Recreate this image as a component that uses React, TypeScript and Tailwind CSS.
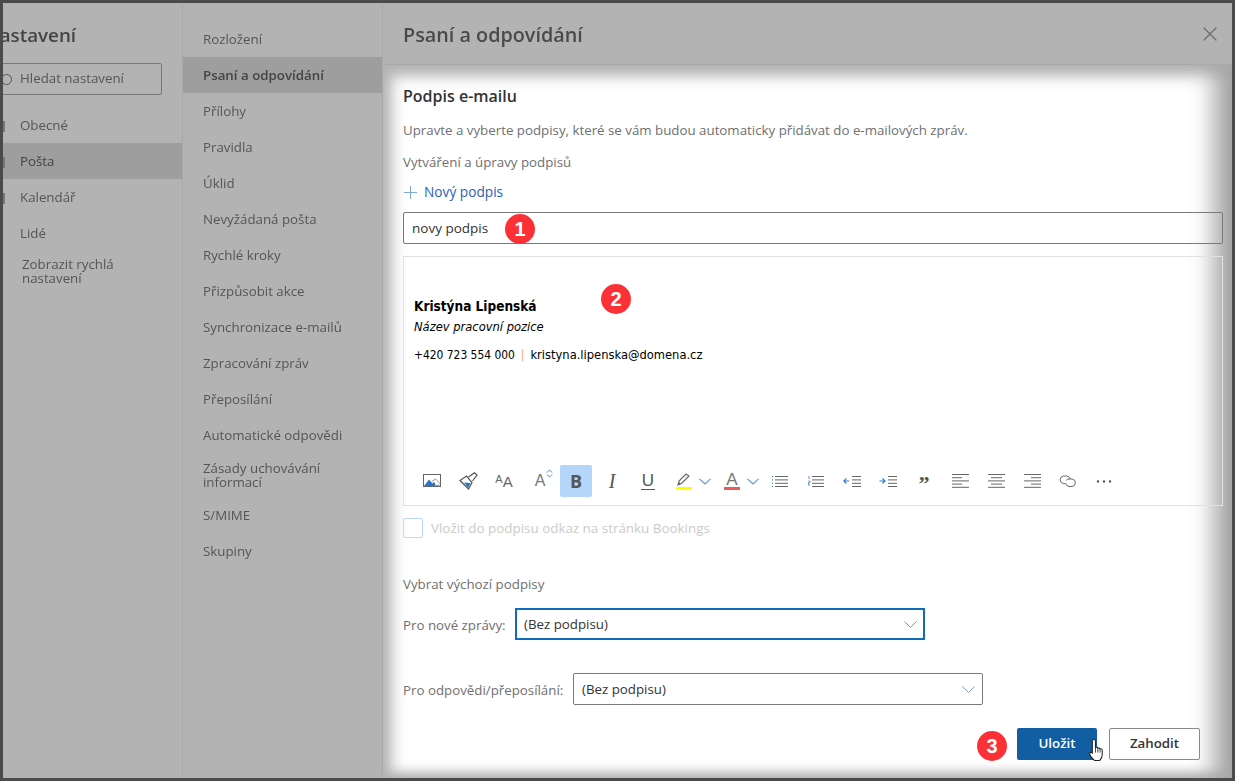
import { X } from 'lucide-react';

const font = "font-['Open_Sans','Noto_Sans',sans-serif]";

const mainMenu = ['Obecné', 'Pošta', 'Kalendář', 'Lidé'];
const subMenu = [
  'Rozložení',
  'Psaní a odpovídání',
  'Přílohy',
  'Pravidla',
  'Úklid',
  'Nevyžádaná pošta',
  'Rychlé kroky',
  'Přizpůsobit akce',
  'Synchronizace e-mailů',
  'Zpracování zpráv',
  'Přeposílání',
  'Automatické odpovědi',
];

function Badge({ n, className }: { n: number; className: string }) {
  return (
    <span
      className={`absolute flex h-[30px] w-[30px] items-center justify-center rounded-full bg-[#fb3137] text-[20px] leading-none font-bold text-white font-['Liberation_Sans',sans-serif] ${className}`}
    >
      {n}
    </span>
  );
}

function Lines({ x, w }: { x: number; w: number }) {
  return (
    <>
      {[1, 4.4, 7.800, 11].map((y) => (
        <rect key={y} x={x} y={y} width={w} height="1" fill="#666" />
      ))}
    </>
  );
}

function Tool({ children, active }: { children: React.ReactNode; active?: boolean }) {
  return (
    <div className={`flex h-8 w-8 items-center justify-center ${active ? 'rounded-[2px] bg-[#b3d6f9]' : ''}`}>
      {children}
    </div>
  );
}

function Caret() {
  return (
    <svg width="12" height="7" viewBox="0 0 12 7" className="ml-[7px]">
      <path d="M.5.8 6 6 11.5.8" fill="none" stroke="#5f93d6" strokeWidth="1.1" />
    </svg>
  );
}

function SelectChevron({ color }: { color: string }) {
  return (
    <svg width="13" height="7" viewBox="0 0 13 7" fill="none" stroke={color} strokeWidth="1">
      <path d="M.5.5 6.500 6.500l6-6" />
    </svg>
  );
}

function Toolbar() {
  return (
    <div className="flex items-center gap-1 pl-[12px]">
      <Tool>
        <svg width="18" height="14" viewBox="0 0 18 14">
          <rect x=".5" y=".5" width="17" height="12" fill="none" stroke="#666" />
          <path d="M1 12 6 5.500l3.500 4L11 8l1 1 .5 3z" fill="#2b76c9" />
          <path d="M9 7.500 12.500 5 17 9.500M11 12l6-1" fill="none" stroke="#777" strokeWidth=".8" />
        </svg>
      </Tool>
      <Tool>
        <svg width="19" height="18" viewBox="0 0 19 18">
          <path d="M1 8.500 7.500 4l5.500 6.500-3.500 6.500z" fill="none" stroke="#555" strokeWidth="1.2" />
          <path d="M5 10.500l6.500.5-2.300 5z" fill="#2b76c9" />
          <path d="M9.500 5l6-4.300 2.500 2.300-4.500 6" fill="none" stroke="#555" strokeWidth="1.2" />
        </svg>
      </Tool>
      <Tool>
        <span className="flex items-end font-['Liberation_Sans',sans-serif] leading-none text-[#666]">
          <span className="mb-[4px] text-[11px]">A</span>
          <span className="text-[15px]">A</span>
        </span>
      </Tool>
      <Tool>
        <span className="relative font-['Liberation_Sans',sans-serif] text-[16px] leading-none text-[#777]">
          A
          <svg width="7" height="9" viewBox="0 0 7 9" className="absolute top-[-4px] left-[11px]">
            <path d="M1 3.500 3.500 1 6 3.500M1 5.500 3.500 8 6 5.500" fill="none" stroke="#4a8bd8" />
          </svg>
        </span>
      </Tool>
      <Tool active>
        <span className="font-['Open_Sans',sans-serif] text-[18px] leading-none font-bold text-[#555]">B</span>
      </Tool>
      <Tool>
        <span className="font-['Liberation_Serif',serif] text-[20px] leading-none text-[#555] italic">I</span>
      </Tool>
      <Tool>
        <span className="border-b border-[#555] px-[1px] font-['Liberation_Sans',sans-serif] text-[17px] leading-[17px] font-light text-[#555]">U</span>
      </Tool>
      <div className="flex h-8 w-[44px] items-center">
        <div className="ml-[8px] flex flex-col items-center">
          <svg width="16" height="14" viewBox="0 0 16 14">
            <path d="M2 12l1-4 7-7 3 2-7 7z" fill="none" stroke="#666" strokeWidth="1.1" />
            <path d="M2 12l1-3 2 2z" fill="#666" />
          </svg>
          <span className="h-[3px] w-4 bg-[#ffff00]" />
        </div>
        <Caret />
      </div>
      <div className="flex h-8 w-[44px] items-center">
        <div className="ml-[8px] flex flex-col items-center">
          <span className="font-['Liberation_Sans',sans-serif] text-[17px] leading-[14px] text-[#777]">A</span>
          <span className="h-[3px] w-4 bg-[#ee5a5a]" />
        </div>
        <Caret />
      </div>
      <Tool>
        <svg width="16" height="13" viewBox="0 0 16 13">
          <path d="M0 1.500h1M0 4.900h1M0 8.300h1M0 11.500h1" stroke="#2b76c9" strokeWidth="1" />
          <Lines x={3} w={13} />
        </svg>
      </Tool>
      <Tool>
        <svg width="16" height="13" viewBox="0 0 16 13">
          <path d="M1 1v3M.5 6h1.500v1.500H.5V10H2" fill="none" stroke="#4a8bd8" strokeWidth=".9" />
          <Lines x={4} w={12} />
        </svg>
      </Tool>
      <Tool>
        <svg width="18" height="13" viewBox="0 0 18 13">
          <path d="M6 6H.8M3.400 3.400.8 6l2.600 2.600" fill="none" stroke="#2b76c9" strokeWidth="1.1" />
          <Lines x={9} w={9} />
        </svg>
      </Tool>
      <Tool>
        <svg width="18" height="13" viewBox="0 0 18 13">
          <path d="M.5 6H6M3.500 3.400 6 6 3.500 8.600" fill="none" stroke="#2b76c9" strokeWidth="1.1" />
          <Lines x={9} w={9} />
        </svg>
      </Tool>
      <Tool>
        <span className="mt-[6px] font-['Liberation_Serif',serif] text-[22px] leading-none font-bold text-[#555]">”</span>
      </Tool>
      {[
        [[0, 17], [0, 10], [0, 17], [0, 10], [0, 17]],
        [[0, 17], [3, 11], [0, 17], [3, 11], [0, 17]],
        [[0, 17], [7, 10], [0, 17], [7, 10], [0, 17]],
      ].map((rows, i) => (
        <Tool key={i}>
          <svg width="17" height="14" viewBox="0 0 17 14">
            {rows.map(([x, w], j) => (
              <rect key={j} x={x} y={j * 3.2} width={w} height="1" fill="#666" />
            ))}
          </svg>
        </Tool>
      ))}
      <Tool>
        <svg width="18" height="13" viewBox="0 0 18 13" fill="none" stroke="#666">
          <path d="M6.500 8.500H4.300a3.800 3.800 0 0 1 0-7.500h3.200a3.800 3.800 0 0 1 3.700 3" />
          <path d="M7 5.500A3.200 3.200 0 0 1 10 4h3.200a3.800 3.800 0 0 1 0 7.500H10A3.800 3.800 0 0 1 6.800 8.500" />
        </svg>
      </Tool>
      <Tool>
        <svg width="16" height="3" viewBox="0 0 16 3">
          <path d="M1 .5h2v2H1zM7 .5h2v2H7zM13 .5h2v2h-2z" fill="#444" />
        </svg>
      </Tool>
    </div>
  );
}

function HandCursor() {
  return (
    <svg width="17" height="25" viewBox="0 0 15 24" className="absolute top-[735px] left-[1085px]">
      <path
        d="M5 1.500c1 0 1.500.7 1.500 1.700V10l.4-1c1-.4 1.700 0 1.900.8.900-.5 1.800-.2 2 .7.900-.4 2-.1 2.200 1v4.500c0 2.500-1 4-2.300 5.500H5.500C4.500 20.500 1 16.500 1 15c0-1 1-1.500 2-1l.5.500V3.200C3.500 2.200 4 1.500 5 1.500z"
        fill="#fff"
        stroke="#222"
        strokeWidth="1"
      />
      <path d="M6.500 10v4M8.800 10v4M11 11v3" stroke="#222" strokeWidth=".8" />
    </svg>
  );
}

export default function App() {
  return (
    <div className={`relative flex h-[781px] w-[1235px] overflow-hidden border-[3px] border-[#4b4b4b] bg-[#b3b3b3] ${font}`}>
      {/* dimmed settings columns */}
      <div className="flex w-[380px] shrink-0 blur-[0.6px]">
        <div className="w-[180px] shrink-0 overflow-hidden border-r border-[#a9a9a9] text-[#555]">
          <h1 className="mt-[19px] ml-[-18px] text-[18.800px] leading-[26px] font-semibold whitespace-nowrap text-[#444]">Nastavení</h1>
          <div className="mt-[15px] ml-[-8px] flex h-[32px] w-[167px] items-center rounded-[2px] border border-[#777] pl-[5px]">
            <span className="h-[11px] w-[11px] rounded-full border border-[#555]" />
            <span className="ml-[8px] text-[13.300px]">Hledat nastavení</span>
          </div>
          <div className="mt-[12px]">
            {mainMenu.map((item) => (
              <div
                key={item}
                className={`flex h-9 items-center pt-[2px] text-[13.300px] ${item === 'Pošta' ? 'bg-[#9e9e9e] text-[#444]' : ''}`}
              >
                <span className={`h-[11px] w-[2px] ${item === 'Lidé' ? '' : 'bg-[#777]'}`} />
                <span className="ml-[15px]">{item}</span>
              </div>
            ))}
            <div className="mt-[6px] pl-[19px] text-[13.300px] leading-[14px]">
              Zobrazit rychlá
              <br />
              nastavení
            </div>
          </div>
        </div>
        <div className="w-[200px] shrink-0 border-r border-[#a9a9a9] pt-[18px] text-[13.300px] text-[#555]">
          {subMenu.map((item) => (
            <div
              key={item}
              className={`flex h-9 items-center pt-[2px] pl-[20px] ${item === 'Psaní a odpovídání' ? 'bg-[#9e9e9e] font-semibold text-[#444]' : ''}`}
            >
              {item}
            </div>
          ))}
          <div className="mt-[8px] mb-[8px] pl-[20px] leading-[14px]">
            Zásady uchovávání
            <br />
            informací
          </div>
          <div className="flex h-9 items-center pt-[2px] pl-[20px]">S/MIME</div>
          <div className="flex h-9 items-center pt-[2px] pl-[20px]">Skupiny</div>
        </div>
      </div>

      <div className="flex min-w-0 flex-1 flex-col">
        <div className="flex h-[62px] shrink-0 items-center justify-between border-b border-[#a9a9a9] pr-[10px] pl-[20px] blur-[0.4px]">
          <h2 className="pt-[2px] text-[19.800px] font-semibold text-[#4a4a4a]">Psaní a odpovídání</h2>
          <X className="h-[24px] w-[24px] text-[#6d6d6d]" strokeWidth={1.2} />
        </div>

        <div className="flex-1 bg-white pt-[19px] pr-[9px] pl-[20px] shadow-[inset_12px_0_16px_-4px_#b3b3b3,inset_-26px_0_24px_-8px_#a3a3a3,inset_0_14px_16px_-4px_#b3b3b3,inset_0_-8px_12px_-4px_#b3b3b3]">
          <h3 className="text-[16px] leading-[24px] font-semibold text-[#333]">Podpis e-mailu</h3>
          <p className="mt-[13px] text-[13.300px] leading-[18px] text-[#707070]">
            Upravte a vyberte podpisy, které se vám budou automaticky přidávat do e-mailových zpráv.
          </p>
          <p className="mt-[14px] text-[13.300px] leading-[18px] text-[#707070]">Vytváření a úpravy podpisů</p>
          <div className="mt-[12px] flex h-[18px] items-center text-[13.700px] text-[#2b5fb3]">
            <svg width="13" height="13" viewBox="0 0 13 13" className="mr-[7px] ml-[1px]" stroke="#7fa9d9" strokeWidth="1">
              <path d="M6.500 0v13M0 6.500h13" />
            </svg>
            Nový podpis
          </div>

          <div className="mt-[11px] flex h-[32px] items-center rounded-[2px] border border-[#7a7a7a] pt-[1px] pl-[8px] text-[13.500px] text-[#333]">
            novy podpis
          </div>

          <div className="mt-[12px] h-[250px] border border-[#e1e1e1] pt-[39px] pl-[10px] text-black">
            <div className="font-['DejaVu_Sans',sans-serif] text-[13.500px] leading-[20px] font-bold [font-stretch:condensed]">
              Kristýna Lipenská
            </div>
            <div className="mt-[1px] font-['DejaVu_Sans',sans-serif] text-[12.800px] leading-[20px] italic [font-stretch:condensed]">
              Název pracovní pozice
            </div>
            <div className="mt-[8px] flex font-['DejaVu_Sans',sans-serif] leading-[20px] [font-stretch:condensed]">
              <span className="text-[11.900px]">+420 723 554 000</span>
              <span className="mx-[6px] text-[11.900px] text-[#e8a87c]">|</span>
              <span className="text-[12.800px]">kristyna.lipenska@domena.cz</span>
            </div>
            <div className="mt-[100px] -ml-[10px]">
              <Toolbar />
            </div>
          </div>

          <div className="mt-[12px] flex h-[20px] items-center">
            <span className="h-5 w-5 rounded-[2px] border border-[#bcd8f5]" />
            <span className="ml-2 text-[13.400px] text-[#cbcbcb]">Vložit do podpisu odkaz na stránku Bookings</span>
          </div>

          <p className="mt-[37px] text-[13.300px] leading-[18px] text-[#707070]">Vybrat výchozí podpisy</p>

          <div className="mt-[15px] flex items-center">
            <span className="mt-[4px] w-[112px] shrink-0 text-[13.300px] text-[#707070]">Pro nové zprávy:</span>
            <div className="flex h-[32px] w-[410px] items-center justify-between border-2 border-[#0f6cbd] pr-[6px] pl-[7px] text-[13.300px] text-[#333]">
              <span className="pt-[1px]">(Bez podpisu)</span>
              <SelectChevron color="#b0827c" />
            </div>
          </div>

          <div className="mt-[33px] flex items-center">
            <span className="mt-[4px] w-[170px] shrink-0 text-[13.300px] text-[#707070]">Pro odpovědi/přeposílání:</span>
            <div className="flex h-[32px] w-[410px] items-center justify-between rounded-[2px] border border-[#7a7a7a] pr-[7px] pl-[8px] text-[13.300px] text-[#333]">
              <span className="pt-[1px]">(Bez podpisu)</span>
              <SelectChevron color="#7f9fc6" />
            </div>
          </div>

          <div className="mt-[23px] flex justify-end gap-3 pr-[23px]">
            <button className="h-[32px] w-[80px] rounded-[2px] bg-[#115ea3] text-[13.300px] font-semibold text-white">Uložit</button>
            <button className="h-[32px] w-[91px] rounded-[2px] border border-[#8a8a8a] bg-white text-[13.300px] font-semibold text-[#333]">
              Zahodit
            </button>
          </div>
        </div>
      </div>

      <Badge n={1} className="top-[211px] left-[502px]" />
      <Badge n={2} className="top-[281px] left-[598px]" />
      <Badge n={3} className="top-[728px] left-[974px]" />
      <HandCursor />
    </div>
  );
}
